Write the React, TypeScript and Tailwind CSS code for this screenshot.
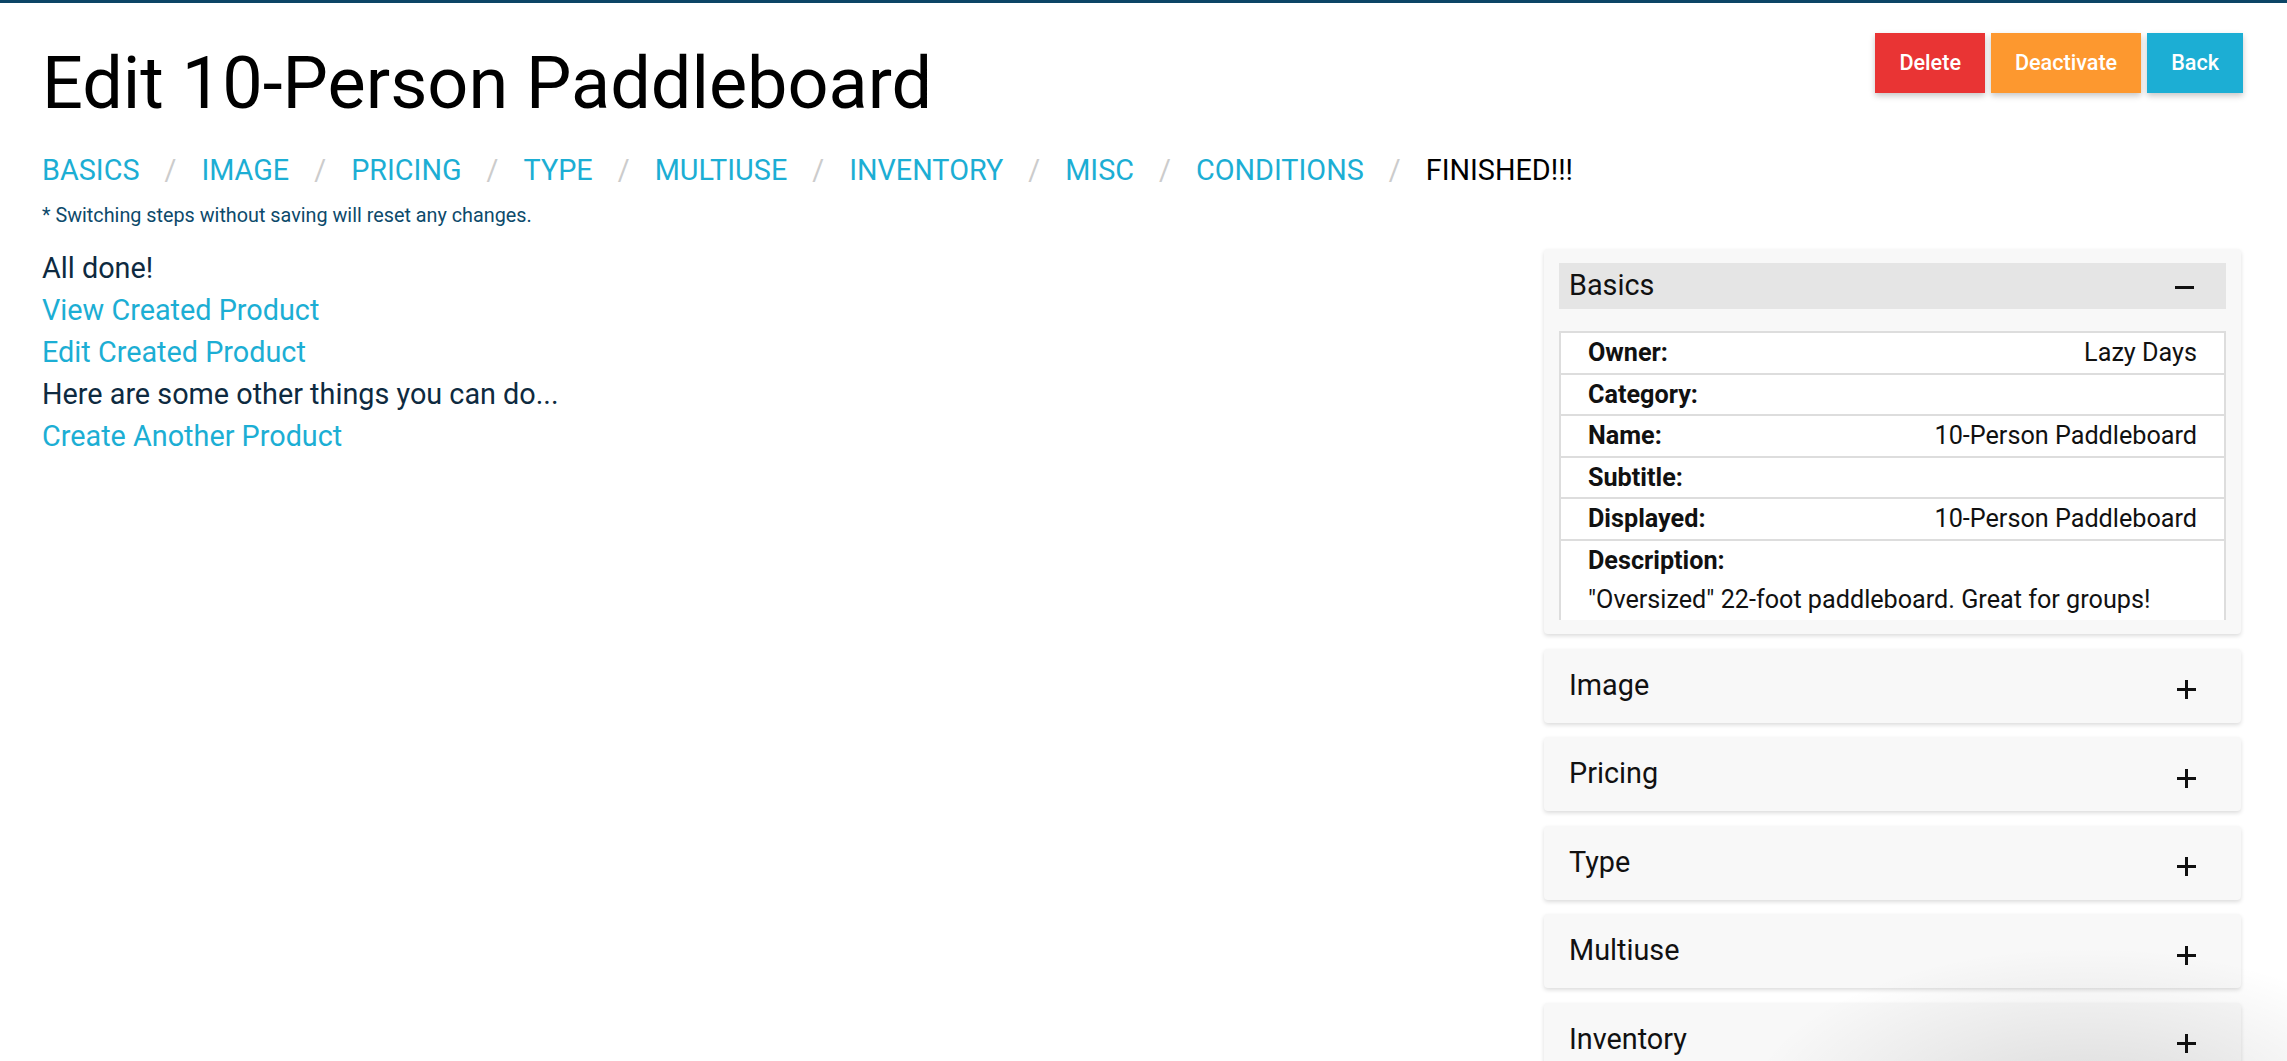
import React from "react";

const steps = ["Basics", "Image", "Pricing", "Type", "Multiuse", "Inventory", "Misc", "Conditions"];

const basics = [
  { label: "Owner:", value: "Lazy Days" },
  { label: "Category:", value: "" },
  { label: "Name:", value: "10-Person Paddleboard" },
  { label: "Subtitle:", value: "" },
  { label: "Displayed:", value: "10-Person Paddleboard" },
];

const collapsed = ["Image", "Pricing", "Type", "Multiuse", "Inventory", "Misc"];

function PlusIcon() {
  return (
    <svg width="19" height="19" viewBox="0 0 19 19" className="translate-y-[4px]">
      <rect x="8" y="0" width="3" height="19" fill="#111" />
      <rect x="0" y="8" width="19" height="3" fill="#111" />
    </svg>
  );
}

function MinusIcon() {
  return (
    <svg width="19" height="19" viewBox="0 0 19 19" className="translate-y-[1px]">
      <rect x="0" y="8" width="19" height="3" fill="#111" />
    </svg>
  );
}

export default function App() {
  return (
    <div className="relative h-screen overflow-hidden bg-white font-['Roboto',sans-serif]">
      <div className="h-[3px] bg-[#0c4566]" />

      <div className="pl-[42px] pr-[44px]">
        {/* Title + actions */}
        <div className="flex items-start justify-between">
          <h1 className="mt-[41px] text-[72px] leading-[79px] text-black">Edit 10-Person Paddleboard</h1>
          <div className="mt-[30px] flex gap-[6px]">
            <button className="h-[60px] px-[24px] bg-[#e93434] text-white text-[21.6px] font-medium shadow-[0_3px_6px_rgba(0,0,0,0.22)]">
              Delete
            </button>
            <button className="h-[60px] px-[24px] bg-[#fd982f] text-white text-[21.6px] font-medium shadow-[0_3px_6px_rgba(0,0,0,0.22)]">
              Deactivate
            </button>
            <button className="h-[60px] px-[24px] bg-[#1caed4] text-white text-[21.6px] font-medium shadow-[0_3px_6px_rgba(0,0,0,0.22)]">
              Back
            </button>
          </div>
        </div>

        {/* Steps */}
        <nav className="mt-[26px] flex items-center text-[28.8px] leading-[42px] uppercase">
          {steps.map((s) => (
            <React.Fragment key={s}>
              <a className="text-[#1caed4]">{s}</a>
              <span className="mx-[25px] text-[#cccccc]">/</span>
            </React.Fragment>
          ))}
          <span className="text-black">Finished!!!</span>
        </nav>
        <p className="mt-[10px] text-[19.8px] leading-[30px] text-[#0d4a6b]">
          * Switching steps without saving will reset any changes.
        </p>

        {/* Content */}
        <div className="mt-[16px] flex items-start justify-between">
          <div className="text-[28.8px] leading-[42px] text-[#0e2a40]">
            <div>All done!</div>
            <a className="block text-[#1caed4]">View Created Product</a>
            <a className="block text-[#1caed4]">Edit Created Product</a>
            <div>Here are some other things you can do...</div>
            <a className="block text-[#1caed4]">Create Another Product</a>
          </div>

          <div className="mt-[2px] mr-[2px] flex w-[697px] flex-col gap-[14.5px]">
            {/* Basics (open) */}
            <div className="rounded-[4px] bg-[#f8f8f8] px-[15px] pt-[14px] pb-[14px] shadow-[0_2px_4px_rgba(0,0,0,0.14)]">
              <div className="flex h-[46px] items-center justify-between bg-[#e5e5e5] pl-[10px] pr-[32px] text-[28.8px] text-[#111]">
                <span>Basics</span>
                <MinusIcon />
              </div>
              <div className="mt-[22px] h-[289px] overflow-hidden border-x-2 border-t-2 border-[#dddddd] bg-white text-[25.2px] text-[#111]">
                {basics.map((r, i) => (
                  <div
                    key={r.label}
                    className={`flex justify-between px-[27px] leading-[39.5px] ${i > 0 ? "border-t-2 border-[#dddddd]" : ""}`}
                  >
                    <span className="font-bold">{r.label}</span>
                    <span>{r.value}</span>
                  </div>
                ))}
                <div className="border-t-2 border-[#dddddd] px-[27px] leading-[39.5px]">
                  <div className="font-bold">Description:</div>
                  <div>"Oversized" 22-foot paddleboard. Great for groups!</div>
                </div>
              </div>
            </div>

            {collapsed.map((c) => (
              <div
                key={c}
                className="rounded-[4px] bg-[#f8f8f8] px-[15px] py-[14px] shadow-[0_2px_4px_rgba(0,0,0,0.14)]"
              >
                <div className="flex h-[46px] items-center justify-between pl-[10px] pr-[30px] text-[28.8px] text-[#111]">
                  <span>{c}</span>
                  <PlusIcon />
                </div>
              </div>
            ))}
          </div>
        </div>
      </div>

      {/* soft glow in the lower right corner */}
      <div className="pointer-events-none absolute right-[-160px] top-[940px] h-[360px] w-[720px] bg-[radial-gradient(ellipse_at_center,rgba(0,0,0,0.13)_0%,rgba(0,0,0,0.05)_40%,rgba(0,0,0,0)_68%)]" />
    </div>
  );
}
